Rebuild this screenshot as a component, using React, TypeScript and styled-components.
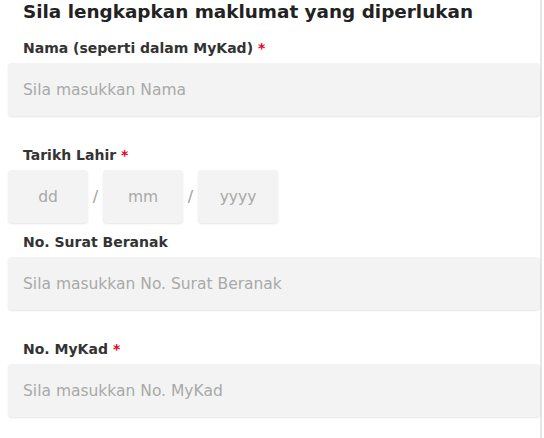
import React from "react";
import styled, { createGlobalStyle } from "styled-components";

const GlobalStyle = createGlobalStyle`
  html, body { margin: 0; padding: 0; background: #ffffff; }
  body { font-family: "DejaVu Sans", "Liberation Sans", sans-serif; }
  * { box-sizing: border-box; }
`;

const Page = styled.div`
  width: 542px;
  min-height: 438px;
  border-right: 2px solid #e6e6e6;
  padding-left: 8px;
  display: flex;
  flex-direction: column;
`;

const Heading = styled.h2`
  margin: 0 0 14px 15px;
  font-size: 18.4px;
  line-height: 24px;
  font-weight: 700;
  color: #222222;
`;

const Field = styled.div<{ $gap: number }>`
  display: flex;
  flex-direction: column;
  margin-bottom: ${(p) => p.$gap}px;
`;

const Label = styled.label`
  margin: 0 0 5px 15px;
  font-size: 14px;
  line-height: 20px;
  font-weight: 700;
  color: #333333;
`;

const Star = styled.span`
  color: #e8001c;
  margin-left: 5px;
`;

const Input = styled.input`
  height: 53px;
  width: 100%;
  border: none;
  border-radius: 4px;
  background: #f3f3f3;
  box-shadow: 0 1px 2px rgba(0, 0, 0, 0.1);
  padding: 0 15px;
  font-family: inherit;
  font-size: 15.5px;
  color: #333333;
  outline: none;
  &::placeholder { color: #a9a9a9; }
`;

const DateRow = styled.div`
  display: flex;
  align-items: center;
`;

const DateBox = styled(Input)`
  width: 80px;
  padding: 0;
  text-align: center;
`;

const Slash = styled.span`
  width: 15px;
  text-align: center;
  font-size: 16px;
  color: #a0a0a0;
`;

export default function App() {
  return (
    <>
      <GlobalStyle />
      <Page>
        <Heading>Sila lengkapkan maklumat yang diperlukan</Heading>
        <Field $gap={29}>
          <Label>
            Nama (seperti dalam MyKad)<Star>*</Star>
          </Label>
          <Input placeholder="Sila masukkan Nama" />
        </Field>
        <Field $gap={9}>
          <Label>
            Tarikh Lahir<Star>*</Star>
          </Label>
          <DateRow>
            <DateBox placeholder="dd" />
            <Slash>/</Slash>
            <DateBox placeholder="mm" />
            <Slash>/</Slash>
            <DateBox placeholder="yyyy" />
          </DateRow>
        </Field>
        <Field $gap={29}>
          <Label>No. Surat Beranak</Label>
          <Input placeholder="Sila masukkan No. Surat Beranak" />
        </Field>
        <Field $gap={20}>
          <Label>
            No. MyKad<Star>*</Star>
          </Label>
          <Input placeholder="Sila masukkan No. MyKad" />
        </Field>
      </Page>
    </>
  );
}
